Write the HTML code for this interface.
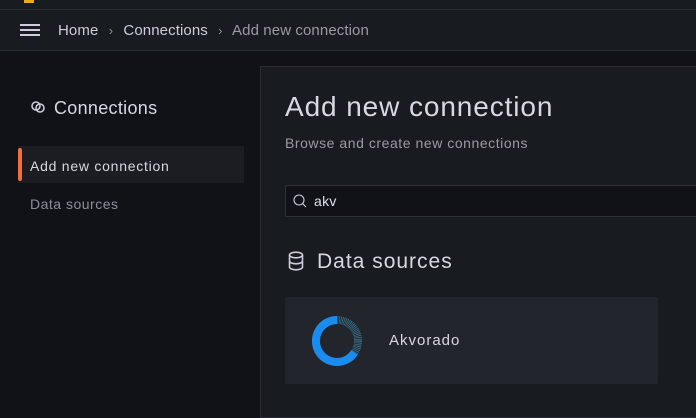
<!DOCTYPE html><html><head><style>
body{margin:0;width:696px;height:413px;overflow:hidden;background:#111217;font-family:"Liberation Sans",sans-serif;position:relative}
.abs{position:absolute;white-space:nowrap}
</style></head><body>
<div class="abs" style="left:0;top:0;width:696px;height:9px;background:#181b1f;border-bottom:1px solid #2a2d33"></div>
<div class="abs" style="left:24px;top:0;width:10px;height:3px;background:#f2a81d"></div>
<div class="abs" style="left:0;top:10px;width:696px;height:40px;background:#181b1f;border-bottom:1px solid #2c2f35"></div>
<div class="abs" style="left:20px;top:24px;width:20px;height:2px;background:#ccccdc;box-shadow:0 5px 0 #ccccdc,0 10px 0 #ccccdc"></div>
<div class="abs" style="left:58px;top:22px;font-size:15px;color:#ccccdc;letter-spacing:0.1px">Home <span style="color:#8e8e9a;margin:0 6px;font-size:13px">›</span> Connections <span style="color:#8e8e9a;margin:0 6px;font-size:13px">›</span> <span style="color:#9a9aa6">Add new connection</span></div>
<svg class="abs" style="left:30px;top:99px" width="16" height="16" viewBox="0 0 16 16"><circle cx="6" cy="7" r="4" fill="none" stroke="#ccccdc" stroke-width="1.6"/><circle cx="10" cy="9" r="4" fill="none" stroke="#ccccdc" stroke-width="1.6"/></svg>
<div class="abs" style="left:54px;top:98px;font-size:18px;color:#d8d8e2;letter-spacing:0.3px">Connections</div>
<div class="abs" style="left:18px;top:146px;width:226px;height:37px;background:#1c1d22"></div>
<div class="abs" style="left:18px;top:148px;width:4px;height:33px;background:#f46e38;border-radius:2px"></div>
<div class="abs" style="left:30px;top:158px;font-size:14px;color:#d8d8e2;letter-spacing:0.75px">Add new connection</div>
<div class="abs" style="left:30px;top:196px;font-size:14px;color:#8e8e9a;letter-spacing:0.5px">Data sources</div>
<div class="abs" style="left:260px;top:66px;width:440px;height:350px;background:#181b1f;border:1px solid #2a2d33"></div>
<div class="abs" style="left:285px;top:91px;font-size:28px;color:#d8d8e2;letter-spacing:0.9px">Add new connection</div>
<div class="abs" style="left:285px;top:135px;font-size:14px;color:#9a9aa6;letter-spacing:0.55px">Browse and create new connections</div>
<div class="abs" style="left:285px;top:185px;width:420px;height:30px;background:#111217;border:1px solid #2f3238;border-radius:2px"></div>
<svg class="abs" style="left:292px;top:193px" width="16" height="16" viewBox="0 0 16 16"><circle cx="7" cy="7" r="5" fill="none" stroke="#ccccdc" stroke-width="1.1"/><path d="M10.5 10.5L14 14" stroke="#ccccdc" stroke-width="1.1"/></svg>
<div class="abs" style="left:314px;top:193px;font-size:14px;color:#e0e0ea;letter-spacing:0.3px">akv</div>
<svg class="abs" style="left:287px;top:251px" width="18" height="20" viewBox="0 0 18 20"><g fill="none" stroke="#ccccdc" stroke-width="1.6"><ellipse cx="9" cy="4" rx="6.5" ry="2.8"/><path d="M2.5 4v12c0 1.6 3 2.8 6.5 2.8s6.5-1.2 6.5-2.8V4M2.5 10c0 1.6 3 2.8 6.5 2.8s6.5-1.2 6.5-2.8"/></g></svg>
<div class="abs" style="left:317px;top:250px;font-size:21px;color:#d8d8e2;letter-spacing:1px">Data sources</div>
<div class="abs" style="left:285px;top:297px;width:373px;height:87px;background:#22252b;border-radius:2px"></div>
<svg class="abs" style="left:310px;top:314px" width="54" height="54" viewBox="0 0 54 54"><circle cx="27" cy="27" r="21" fill="none" stroke="#3a6f8c" stroke-width="8" stroke-dasharray="0.8 0.8"/><path d="M27 6A21 21 0 1 0 44.5 38.5" fill="none" stroke="#1a8cf0" stroke-width="8"/></svg>
<div class="abs" style="left:389px;top:332px;font-size:15px;color:#d8d8e2;letter-spacing:1px">Akvorado</div>
</body></html>
